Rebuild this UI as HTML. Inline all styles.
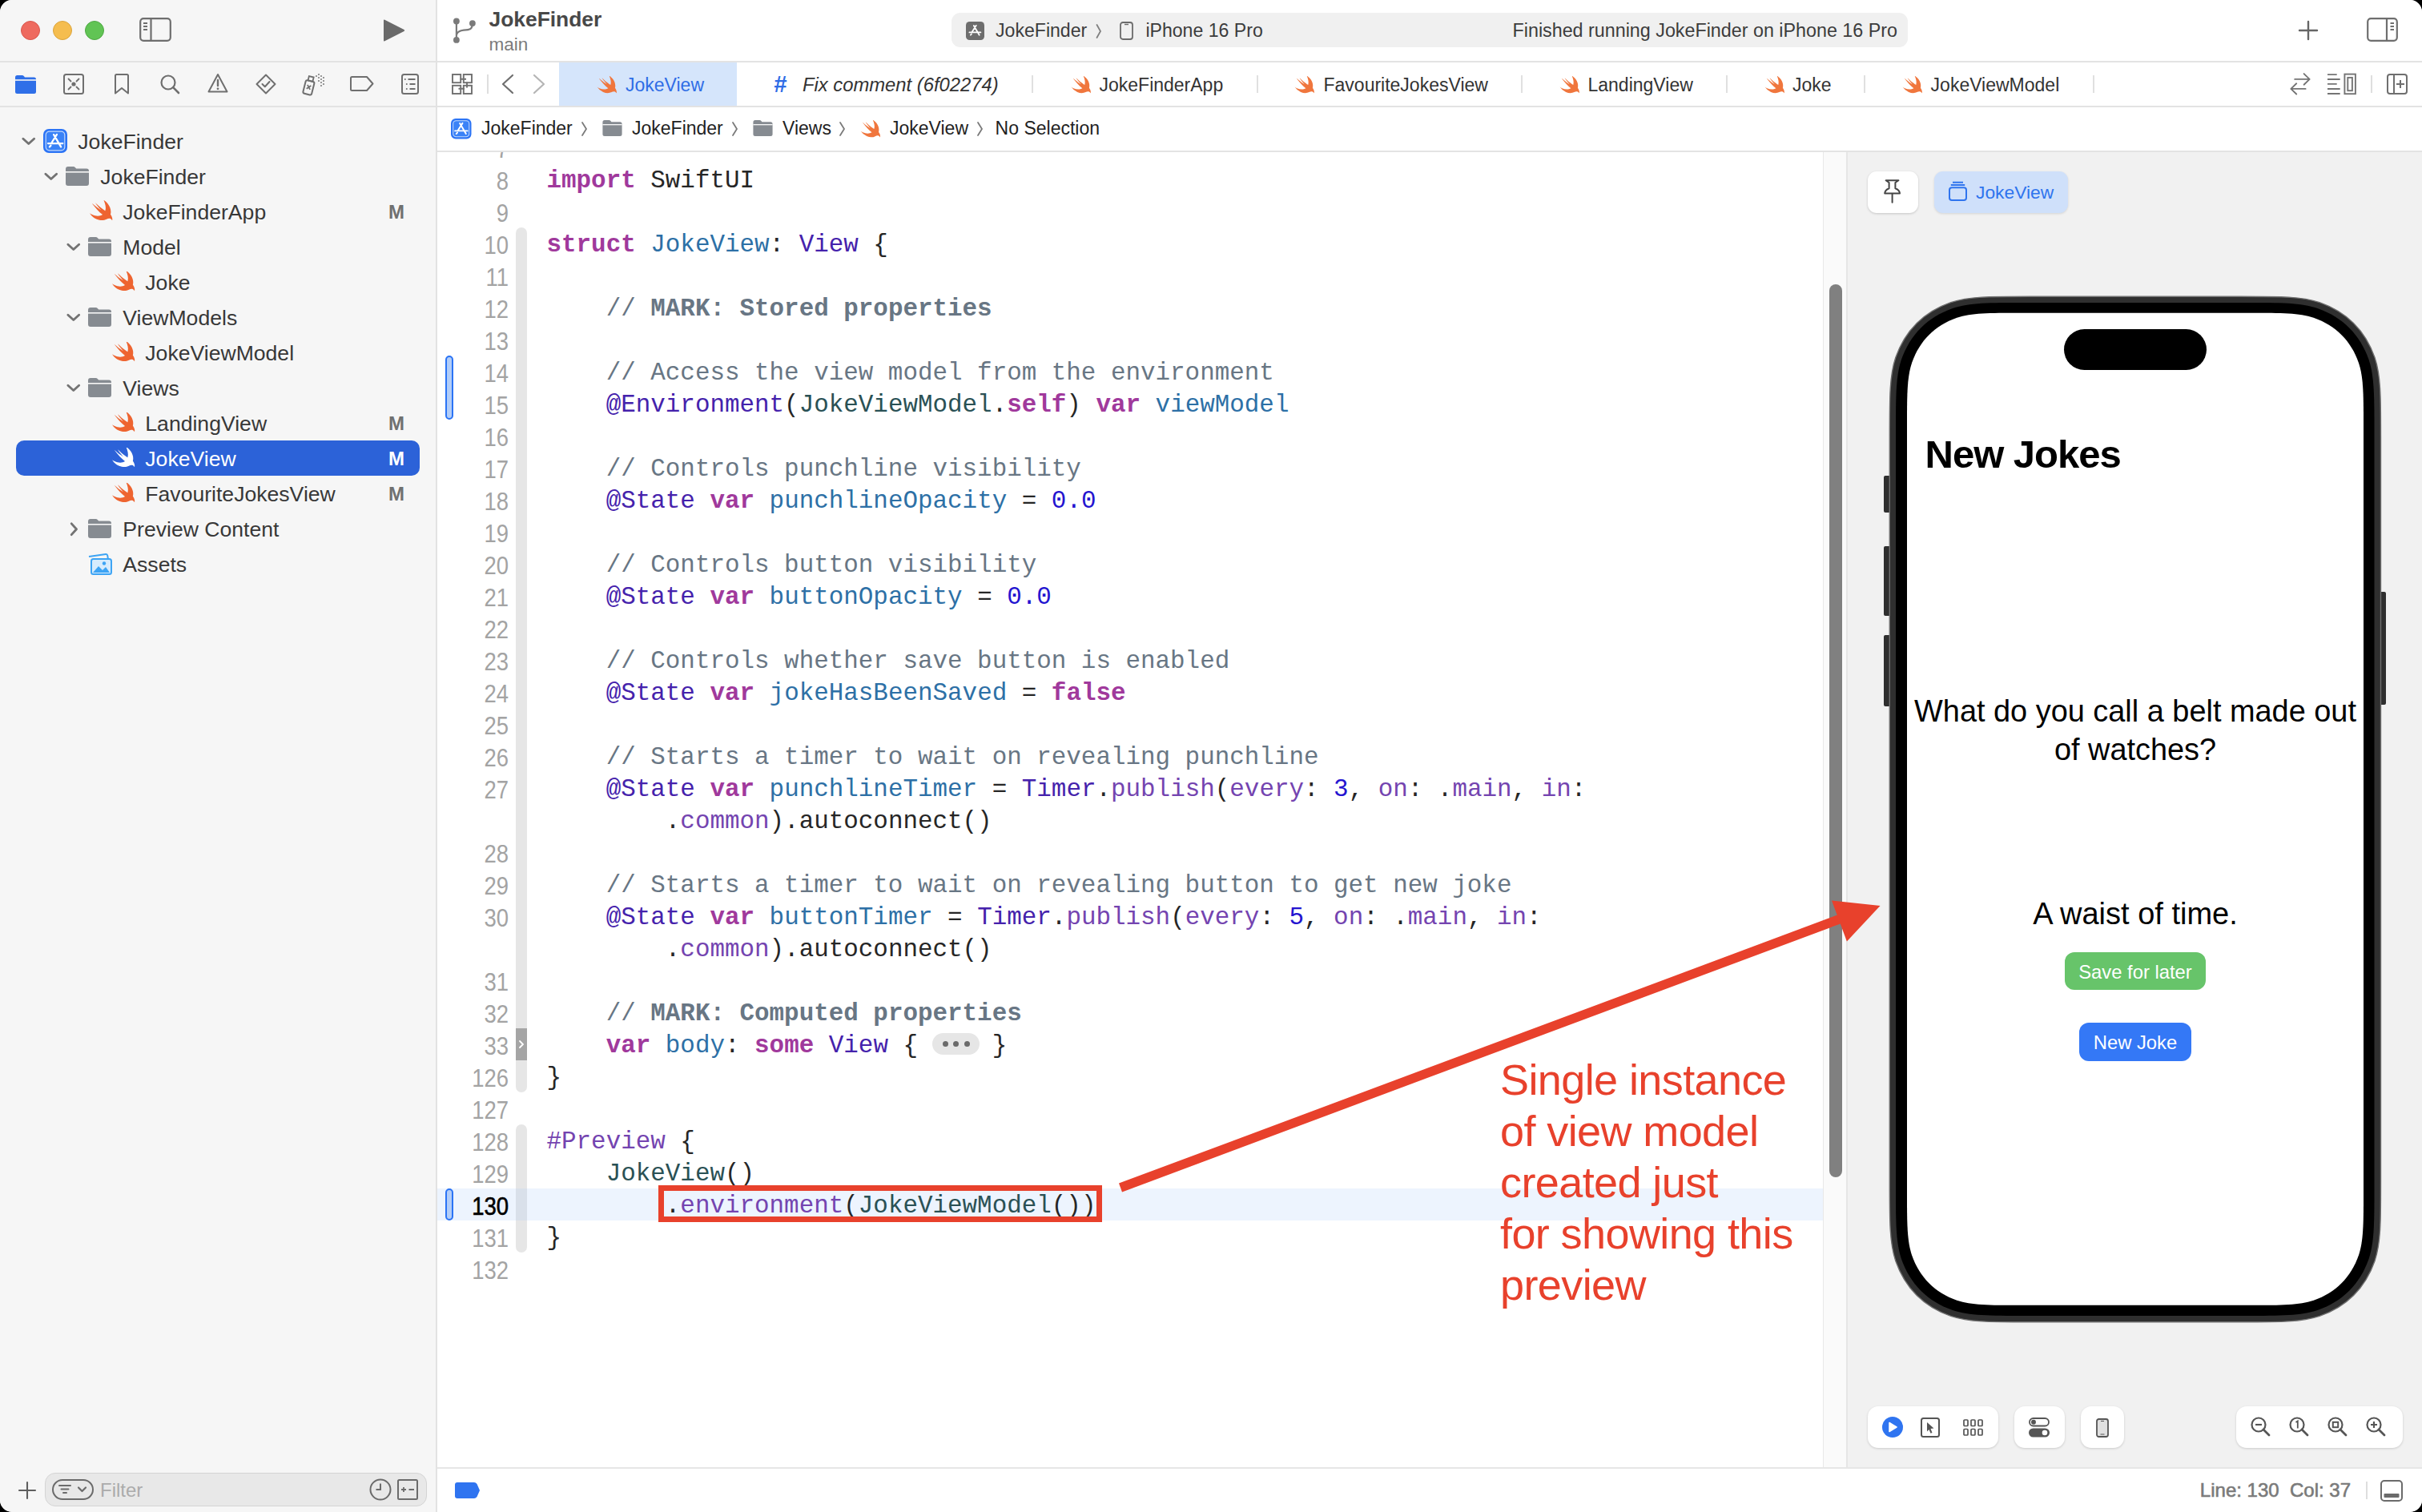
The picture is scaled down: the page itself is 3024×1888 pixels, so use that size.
<!DOCTYPE html><html><head><meta charset="utf-8"><style>
html,body{margin:0;padding:0;background:#000;width:3024px;height:1888px;overflow:hidden}
#win{position:absolute;left:0;top:0;width:3024px;height:1888px;background:#fff;border-radius:15px;overflow:hidden;font-family:"Liberation Sans",sans-serif}
.a{position:absolute;white-space:pre;margin:0}
svg.a{overflow:visible}
</style></head><body><div id="win">
<div class="a" style="left:0px;top:0px;width:544px;height:1888px;background:#f6f6f6;"></div>
<div class="a" style="left:544px;top:0px;width:2px;height:1888px;background:#e2e2e2;"></div>
<div class="a" style="left:0px;top:76px;width:544px;height:2px;background:#e3e3e3;"></div>
<div class="a" style="left:0px;top:132px;width:544px;height:2px;background:#e3e3e3;"></div>
<div class="a" style="left:26px;top:26px;width:22px;height:22px;border-radius:50%;background:#ee6a5f;border:1px solid #d9574d"></div>
<div class="a" style="left:66px;top:26px;width:22px;height:22px;border-radius:50%;background:#f5bd4f;border:1px solid #dba43c"></div>
<div class="a" style="left:106px;top:26px;width:22px;height:22px;border-radius:50%;background:#61c454;border:1px solid #4ea843"></div>
<svg class="a" style="left:174px;top:22px;" width="40" height="30" viewBox="0 0 40 30"><rect x="1.2" y="1.2" width="37.6" height="27.6" rx="4" fill="none" stroke="#6e6e6e" stroke-width="2.2"/><path d="M14.5 1.5 V28.5" stroke="#6e6e6e" stroke-width="2.2"/><path d="M5 7 H10 M5 11 H10 M5 15 H10" stroke="#6e6e6e" stroke-width="1.8"/></svg>
<svg class="a" style="left:477px;top:24px;" width="29" height="28" viewBox="0 0 29 28"><path d="M2 1.5 Q2 0 3.4 0.8 L27.5 13 Q29 14 27.5 15 L3.4 27.2 Q2 28 2 26.5 Z" fill="#6a6a6a"/></svg>
<svg class="a" style="left:19px;top:94px;" width="26" height="23" viewBox="0 0 26 23"><path fill="#2f6fe8" d="M0 2.5 Q0 0 2.5 0 H8.5 Q10 0 11 1.2 L12 2.4 H23.5 Q26 2.4 26 4.9 V20.5 Q26 23 23.5 23 H2.5 Q0 23 0 20.5 Z"/><rect x="0" y="5.2" width="26" height="1.6" fill="#f6f6f6"/></svg>
<svg class="a" style="left:79px;top:92px;" width="26" height="26" viewBox="0 0 26 26"><rect x="1" y="1" width="24" height="24" rx="2.5" fill="none" stroke="#6f6f6f" stroke-width="2"/><circle cx="13" cy="13" r="2.6" fill="#6f6f6f"/><path d="M6.5 6.5 L9.5 9.5 M19.5 6.5 L16.5 9.5 M6.5 19.5 L9.5 16.5 M19.5 19.5 L16.5 16.5" stroke="#6f6f6f" stroke-width="1.8" stroke-linecap="round"/></svg>
<svg class="a" style="left:142px;top:92px;" width="20" height="26" viewBox="0 0 20 26"><path d="M2 2.5 Q2 1 3.5 1 H16.5 Q18 1 18 2.5 V24.5 L10 18 L2 24.5 Z" fill="none" stroke="#6f6f6f" stroke-width="2" stroke-linejoin="round"/></svg>
<svg class="a" style="left:199px;top:92px;" width="26" height="26" viewBox="0 0 26 26"><circle cx="11" cy="11" r="8.5" fill="none" stroke="#6f6f6f" stroke-width="2.2"/><path d="M17.2 17.2 L24 24" stroke="#6f6f6f" stroke-width="2.6" stroke-linecap="round"/></svg>
<svg class="a" style="left:259px;top:91px;" width="26" height="26" viewBox="0 0 26 26"><path d="M13 2 L24.5 23.5 H1.5 Z" fill="none" stroke="#6f6f6f" stroke-width="2" stroke-linejoin="round"/><path d="M13 9 V16" stroke="#6f6f6f" stroke-width="2.4" stroke-linecap="round"/><circle cx="13" cy="19.8" r="1.4" fill="#6f6f6f"/></svg>
<svg class="a" style="left:319px;top:92px;" width="26" height="26" viewBox="0 0 26 26"><path d="M13 1.5 L24.5 13 L13 24.5 L1.5 13 Z" fill="none" stroke="#6f6f6f" stroke-width="2" stroke-linejoin="round"/><path d="M8.5 13 L11.8 16.2 L17.5 10" fill="none" stroke="#6f6f6f" stroke-width="2" stroke-linecap="round" stroke-linejoin="round"/></svg>
<svg class="a" style="left:376px;top:91px;" width="33" height="29" viewBox="0 0 33 29"><g transform="rotate(14 10 18)"><rect x="4" y="10" width="11" height="17" rx="2" fill="none" stroke="#6f6f6f" stroke-width="2"/><rect x="6.5" y="4.5" width="6" height="5.5" fill="none" stroke="#6f6f6f" stroke-width="1.8"/><path d="M7.2 15.5 L11.8 20.5 M11.8 15.5 L7.2 20.5" stroke="#6f6f6f" stroke-width="1.7"/></g><g fill="#6f6f6f"><circle cx="19" cy="4" r=".95"/><circle cx="22" cy="2" r=".95"/><circle cx="22" cy="6" r=".95"/><circle cx="25" cy="4" r=".95"/><circle cx="25" cy="8" r=".95"/><circle cx="28" cy="6" r=".95"/><circle cx="28" cy="10" r=".95"/><circle cx="25" cy="12" r=".95"/><circle cx="28" cy="14" r=".95"/><circle cx="22" cy="10" r=".95"/><circle cx="25" cy="16" r=".95"/></g></svg>
<svg class="a" style="left:437px;top:95px;" width="30" height="19" viewBox="0 0 30 19"><path d="M2.5 1 H21 L28.5 9.5 L21 18 H2.5 Q1 18 1 16.5 V2.5 Q1 1 2.5 1 Z" fill="none" stroke="#6f6f6f" stroke-width="2" stroke-linejoin="round"/></svg>
<svg class="a" style="left:501px;top:92px;" width="22" height="26" viewBox="0 0 22 26"><rect x="1" y="1" width="20" height="24" rx="2.5" fill="none" stroke="#6f6f6f" stroke-width="2"/><path d="M8.5 7 H17.5 M10.5 13 H17.5 M10.5 19 H17.5" stroke="#6f6f6f" stroke-width="1.9"/><circle cx="4.8" cy="7" r="1" fill="#6f6f6f"/><circle cx="6.8" cy="13" r="1" fill="#6f6f6f"/><circle cx="6.8" cy="19" r="1" fill="#6f6f6f"/></svg>
<svg class="a" style="left:27.25px;top:168.45000000000002px;" width="17.5" height="17.5" viewBox="0 0 14 14"><path d="M1.5 4.2 L7 9.2 L12.5 4.2" fill="none" stroke="#737373" stroke-width="2.3" stroke-linecap="round" stroke-linejoin="round"/></svg>
<svg class="a" style="left:54px;top:161.4px;" width="30" height="30.0" viewBox="0 0 30 30"><rect x="0" y="0" width="30" height="30" rx="7" fill="#2c74f5"/><rect x="2.6" y="2.6" width="24.8" height="24.8" rx="5" fill="#c3dafc"/><rect x="3.8" y="3.8" width="22.4" height="22.4" rx="4" fill="#3a82f7"/><g stroke="#fff" stroke-width="2.3" stroke-linecap="round" fill="none"><path d="M13.1 7.1 L22.1 22.4 M17 6.9 L10.6 17 M9.4 20.7 L7.9 22.4 M6 18.1 H24.3"/></g></svg>
<div class="a" style="left:97.3px;top:164.1px;font-size:26.6px;line-height:26.6px;color:#383838;font-family:'Liberation Sans',sans-serif;">JokeFinder</div>
<svg class="a" style="left:55.25px;top:212.45000000000002px;" width="17.5" height="17.5" viewBox="0 0 14 14"><path d="M1.5 4.2 L7 9.2 L12.5 4.2" fill="none" stroke="#737373" stroke-width="2.3" stroke-linecap="round" stroke-linejoin="round"/></svg>
<svg class="a" style="left:82px;top:208.4px;" width="29" height="24.0" viewBox="0 0 29 24"><path fill="#868b91" d="M0 3 Q0 0 3 0 H9.5 Q11 0 12 1.2 L13.2 2.6 H26 Q29 2.6 29 5.6 V21 Q29 24 26 24 H3 Q0 24 0 21 Z"/><rect x="0" y="6" width="29" height="1.6" fill="#f6f6f6"/></svg>
<div class="a" style="left:125.3px;top:208.1px;font-size:26.6px;line-height:26.6px;color:#383838;font-family:'Liberation Sans',sans-serif;">JokeFinder</div>
<svg class="a" style="left:108.5px;top:249.4px;" width="31.900000000000006" height="28.599999999999994" viewBox="0.5 3.4 20.4 17.2"><path fill="#ee6430" d="M13.543 3.41c4.114 2.47 6.545 7.162 5.549 11.131-.024.093-.05.181-.076.272l.002.001c2.062 2.538 1.5 5.258 1.236 4.745-1.072-2.086-3.066-1.568-4.088-1.043a6.803 6.803 0 0 1-.281.158l-.02.012-.002.002c-2.115 1.123-4.957 1.205-7.812-.022a12.568 12.568 0 0 1-5.64-4.838c.649.48 1.35.902 2.097 1.252 3.019 1.414 6.051 1.311 8.197-.002C9.651 12.73 7.101 9.670 5.146 7.191a10.628 10.628 0 0 1-1.005-1.384c2.34 2.142 6.038 4.83 7.365 5.576C8.69 8.408 6.208 4.743 7.324 5.86c3.724 3.769 7.181 5.912 7.181 5.912.115.065.203.117.272.164.074-.19.14-.39.193-.596.574-2.1-.088-4.92-1.37-7.93z"/></svg>
<div class="a" style="left:153.3px;top:252.1px;font-size:26.6px;line-height:26.6px;color:#383838;font-family:'Liberation Sans',sans-serif;">JokeFinderApp</div>
<div class="a" style="left:-505.0px;width:2000px;text-align:center;top:253.3px;font-size:24px;line-height:24px;color:#707070;font-family:'Liberation Sans',sans-serif;font-weight:bold;">M</div>
<svg class="a" style="left:83.25px;top:300.45px;" width="17.5" height="17.5" viewBox="0 0 14 14"><path d="M1.5 4.2 L7 9.2 L12.5 4.2" fill="none" stroke="#737373" stroke-width="2.3" stroke-linecap="round" stroke-linejoin="round"/></svg>
<svg class="a" style="left:110px;top:296.4px;" width="29" height="24.0" viewBox="0 0 29 24"><path fill="#868b91" d="M0 3 Q0 0 3 0 H9.5 Q11 0 12 1.2 L13.2 2.6 H26 Q29 2.6 29 5.6 V21 Q29 24 26 24 H3 Q0 24 0 21 Z"/><rect x="0" y="6" width="29" height="1.6" fill="#f6f6f6"/></svg>
<div class="a" style="left:153.3px;top:296.1px;font-size:26.6px;line-height:26.6px;color:#383838;font-family:'Liberation Sans',sans-serif;">Model</div>
<svg class="a" style="left:136.6px;top:337.4px;" width="31.80000000000001" height="28.600000000000023" viewBox="0.5 3.4 20.4 17.2"><path fill="#ee6430" d="M13.543 3.41c4.114 2.47 6.545 7.162 5.549 11.131-.024.093-.05.181-.076.272l.002.001c2.062 2.538 1.5 5.258 1.236 4.745-1.072-2.086-3.066-1.568-4.088-1.043a6.803 6.803 0 0 1-.281.158l-.02.012-.002.002c-2.115 1.123-4.957 1.205-7.812-.022a12.568 12.568 0 0 1-5.64-4.838c.649.48 1.35.902 2.097 1.252 3.019 1.414 6.051 1.311 8.197-.002C9.651 12.73 7.101 9.670 5.146 7.191a10.628 10.628 0 0 1-1.005-1.384c2.34 2.142 6.038 4.83 7.365 5.576C8.69 8.408 6.208 4.743 7.324 5.86c3.724 3.769 7.181 5.912 7.181 5.912.115.065.203.117.272.164.074-.19.14-.39.193-.596.574-2.1-.088-4.92-1.37-7.93z"/></svg>
<div class="a" style="left:181.3px;top:340.1px;font-size:26.6px;line-height:26.6px;color:#383838;font-family:'Liberation Sans',sans-serif;">Joke</div>
<svg class="a" style="left:83.25px;top:388.45px;" width="17.5" height="17.5" viewBox="0 0 14 14"><path d="M1.5 4.2 L7 9.2 L12.5 4.2" fill="none" stroke="#737373" stroke-width="2.3" stroke-linecap="round" stroke-linejoin="round"/></svg>
<svg class="a" style="left:110px;top:384.4px;" width="29" height="24.0" viewBox="0 0 29 24"><path fill="#868b91" d="M0 3 Q0 0 3 0 H9.5 Q11 0 12 1.2 L13.2 2.6 H26 Q29 2.6 29 5.6 V21 Q29 24 26 24 H3 Q0 24 0 21 Z"/><rect x="0" y="6" width="29" height="1.6" fill="#f6f6f6"/></svg>
<div class="a" style="left:153.3px;top:384.1px;font-size:26.6px;line-height:26.6px;color:#383838;font-family:'Liberation Sans',sans-serif;">ViewModels</div>
<svg class="a" style="left:136.6px;top:425.4px;" width="31.80000000000001" height="28.600000000000023" viewBox="0.5 3.4 20.4 17.2"><path fill="#ee6430" d="M13.543 3.41c4.114 2.47 6.545 7.162 5.549 11.131-.024.093-.05.181-.076.272l.002.001c2.062 2.538 1.5 5.258 1.236 4.745-1.072-2.086-3.066-1.568-4.088-1.043a6.803 6.803 0 0 1-.281.158l-.02.012-.002.002c-2.115 1.123-4.957 1.205-7.812-.022a12.568 12.568 0 0 1-5.64-4.838c.649.48 1.35.902 2.097 1.252 3.019 1.414 6.051 1.311 8.197-.002C9.651 12.73 7.101 9.670 5.146 7.191a10.628 10.628 0 0 1-1.005-1.384c2.34 2.142 6.038 4.83 7.365 5.576C8.69 8.408 6.208 4.743 7.324 5.86c3.724 3.769 7.181 5.912 7.181 5.912.115.065.203.117.272.164.074-.19.14-.39.193-.596.574-2.1-.088-4.92-1.37-7.93z"/></svg>
<div class="a" style="left:181.3px;top:428.1px;font-size:26.6px;line-height:26.6px;color:#383838;font-family:'Liberation Sans',sans-serif;">JokeViewModel</div>
<svg class="a" style="left:83.25px;top:476.45px;" width="17.5" height="17.5" viewBox="0 0 14 14"><path d="M1.5 4.2 L7 9.2 L12.5 4.2" fill="none" stroke="#737373" stroke-width="2.3" stroke-linecap="round" stroke-linejoin="round"/></svg>
<svg class="a" style="left:110px;top:472.4px;" width="29" height="24.0" viewBox="0 0 29 24"><path fill="#868b91" d="M0 3 Q0 0 3 0 H9.5 Q11 0 12 1.2 L13.2 2.6 H26 Q29 2.6 29 5.6 V21 Q29 24 26 24 H3 Q0 24 0 21 Z"/><rect x="0" y="6" width="29" height="1.6" fill="#f6f6f6"/></svg>
<div class="a" style="left:153.3px;top:472.1px;font-size:26.6px;line-height:26.6px;color:#383838;font-family:'Liberation Sans',sans-serif;">Views</div>
<svg class="a" style="left:136.6px;top:513.4px;" width="31.80000000000001" height="28.600000000000023" viewBox="0.5 3.4 20.4 17.2"><path fill="#ee6430" d="M13.543 3.41c4.114 2.47 6.545 7.162 5.549 11.131-.024.093-.05.181-.076.272l.002.001c2.062 2.538 1.5 5.258 1.236 4.745-1.072-2.086-3.066-1.568-4.088-1.043a6.803 6.803 0 0 1-.281.158l-.02.012-.002.002c-2.115 1.123-4.957 1.205-7.812-.022a12.568 12.568 0 0 1-5.64-4.838c.649.48 1.35.902 2.097 1.252 3.019 1.414 6.051 1.311 8.197-.002C9.651 12.73 7.101 9.670 5.146 7.191a10.628 10.628 0 0 1-1.005-1.384c2.34 2.142 6.038 4.83 7.365 5.576C8.69 8.408 6.208 4.743 7.324 5.86c3.724 3.769 7.181 5.912 7.181 5.912.115.065.203.117.272.164.074-.19.14-.39.193-.596.574-2.1-.088-4.92-1.37-7.93z"/></svg>
<div class="a" style="left:181.3px;top:516.1px;font-size:26.6px;line-height:26.6px;color:#383838;font-family:'Liberation Sans',sans-serif;">LandingView</div>
<div class="a" style="left:-505.0px;width:2000px;text-align:center;top:517.3px;font-size:24px;line-height:24px;color:#707070;font-family:'Liberation Sans',sans-serif;font-weight:bold;">M</div>
<div class="a" style="left:20px;top:550px;width:504px;height:44px;background:#2c62d8;border-radius:10px;"></div>
<svg class="a" style="left:136.6px;top:557.4px;" width="31.80000000000001" height="28.600000000000023" viewBox="0.5 3.4 20.4 17.2"><path fill="#fff" d="M13.543 3.41c4.114 2.47 6.545 7.162 5.549 11.131-.024.093-.05.181-.076.272l.002.001c2.062 2.538 1.5 5.258 1.236 4.745-1.072-2.086-3.066-1.568-4.088-1.043a6.803 6.803 0 0 1-.281.158l-.02.012-.002.002c-2.115 1.123-4.957 1.205-7.812-.022a12.568 12.568 0 0 1-5.64-4.838c.649.48 1.35.902 2.097 1.252 3.019 1.414 6.051 1.311 8.197-.002C9.651 12.73 7.101 9.670 5.146 7.191a10.628 10.628 0 0 1-1.005-1.384c2.34 2.142 6.038 4.83 7.365 5.576C8.69 8.408 6.208 4.743 7.324 5.86c3.724 3.769 7.181 5.912 7.181 5.912.115.065.203.117.272.164.074-.19.14-.39.193-.596.574-2.1-.088-4.92-1.37-7.93z"/></svg>
<div class="a" style="left:181.3px;top:560.1px;font-size:26.6px;line-height:26.6px;color:#fff;font-family:'Liberation Sans',sans-serif;">JokeView</div>
<div class="a" style="left:-505.0px;width:2000px;text-align:center;top:561.3px;font-size:24px;line-height:24px;color:#fff;font-family:'Liberation Sans',sans-serif;font-weight:bold;">M</div>
<svg class="a" style="left:136.6px;top:601.4px;" width="31.80000000000001" height="28.600000000000023" viewBox="0.5 3.4 20.4 17.2"><path fill="#ee6430" d="M13.543 3.41c4.114 2.47 6.545 7.162 5.549 11.131-.024.093-.05.181-.076.272l.002.001c2.062 2.538 1.5 5.258 1.236 4.745-1.072-2.086-3.066-1.568-4.088-1.043a6.803 6.803 0 0 1-.281.158l-.02.012-.002.002c-2.115 1.123-4.957 1.205-7.812-.022a12.568 12.568 0 0 1-5.64-4.838c.649.48 1.35.902 2.097 1.252 3.019 1.414 6.051 1.311 8.197-.002C9.651 12.73 7.101 9.670 5.146 7.191a10.628 10.628 0 0 1-1.005-1.384c2.34 2.142 6.038 4.83 7.365 5.576C8.69 8.408 6.208 4.743 7.324 5.86c3.724 3.769 7.181 5.912 7.181 5.912.115.065.203.117.272.164.074-.19.14-.39.193-.596.574-2.1-.088-4.92-1.37-7.93z"/></svg>
<div class="a" style="left:181.3px;top:604.1px;font-size:26.6px;line-height:26.6px;color:#383838;font-family:'Liberation Sans',sans-serif;">FavouriteJokesView</div>
<div class="a" style="left:-505.0px;width:2000px;text-align:center;top:605.3px;font-size:24px;line-height:24px;color:#707070;font-family:'Liberation Sans',sans-serif;font-weight:bold;">M</div>
<svg class="a" style="left:84.25px;top:652.4499999999999px;" width="17.5" height="17.5" viewBox="0 0 14 14"><path d="M4.2 1.5 L9.2 7 L4.2 12.5" fill="none" stroke="#737373" stroke-width="2.3" stroke-linecap="round" stroke-linejoin="round"/></svg>
<svg class="a" style="left:110px;top:648.4px;" width="29" height="24.0" viewBox="0 0 29 24"><path fill="#868b91" d="M0 3 Q0 0 3 0 H9.5 Q11 0 12 1.2 L13.2 2.6 H26 Q29 2.6 29 5.6 V21 Q29 24 26 24 H3 Q0 24 0 21 Z"/><rect x="0" y="6" width="29" height="1.6" fill="#f6f6f6"/></svg>
<div class="a" style="left:153.3px;top:648.1px;font-size:26.6px;line-height:26.6px;color:#383838;font-family:'Liberation Sans',sans-serif;">Preview Content</div>
<svg class="a" style="left:108px;top:689.4px;" width="34" height="30.0" viewBox="0 0 34 30"><path d="M3 6 L24 3 Q26 2.8 26.3 4.8 L27 10" fill="none" stroke="#3da4f4" stroke-width="2"/><rect x="6" y="9" width="25" height="19" rx="2.5" fill="#d7ecfd" stroke="#3da4f4" stroke-width="2"/><path d="M8 26 L15 18 L20 23 L24 19 L29 26 Z" fill="#3da4f4"/><circle cx="22" cy="14.5" r="2.2" fill="#3da4f4"/></svg>
<div class="a" style="left:153.3px;top:692.1px;font-size:26.6px;line-height:26.6px;color:#383838;font-family:'Liberation Sans',sans-serif;">Assets</div>
<svg class="a" style="left:23px;top:1849.5px;" width="22" height="22.0" viewBox="0 0 22 22"><path d="M11 1 V21 M1 11 H21" stroke="#5f5f5f" stroke-width="2.1" stroke-linecap="round"/></svg>
<div class="a" style="left:56px;top:1838.5px;width:477px;height:42.5px;border-radius:13px;background:#e8e8e8;border:1px solid #d4d4d4;box-sizing:border-box"></div>
<svg class="a" style="left:65px;top:1847px;" width="52" height="26" viewBox="0 0 52 26"><rect x="1" y="1" width="50" height="24" rx="12" fill="none" stroke="#6b6b6b" stroke-width="2"/><path d="M9 8 H23 M11.5 12.5 H20.5 M14 17 H18" stroke="#6b6b6b" stroke-width="2" stroke-linecap="round"/><path d="M33 10.5 L37.5 15 L42 10.5" fill="none" stroke="#6b6b6b" stroke-width="2.2" stroke-linecap="round" stroke-linejoin="round"/></svg>
<div class="a" style="left:125.0px;top:1848.6px;font-size:24px;line-height:24px;color:#ababab;font-family:'Liberation Sans',sans-serif;">Filter</div>
<svg class="a" style="left:461px;top:1846px;" width="28" height="28" viewBox="0 0 28 28"><circle cx="14" cy="14" r="12.5" fill="none" stroke="#6b6b6b" stroke-width="2"/><path d="M14 6.5 V14 H8.5" fill="none" stroke="#6b6b6b" stroke-width="2"/></svg>
<svg class="a" style="left:496px;top:1847px;" width="26" height="26" viewBox="0 0 26 26"><rect x="1" y="1" width="24" height="24" rx="1.5" fill="none" stroke="#6b6b6b" stroke-width="2"/><path d="M5 13 H11 M8 10 V16 M14.5 13 H21" stroke="#6b6b6b" stroke-width="1.8"/></svg>
<div class="a" style="left:546px;top:0px;width:2478px;height:76px;background:#ffffff;"></div>
<div class="a" style="left:546px;top:76px;width:2478px;height:2px;background:#e3e3e3;"></div>
<svg class="a" style="left:560px;top:18px;" width="40" height="40" viewBox="0 0 40 40"><g fill="#7a7a7a"><circle cx="9.9" cy="8.5" r="3.9"/><circle cx="29.9" cy="11.1" r="3.9"/><circle cx="9.9" cy="31.9" r="3.9"/></g><g fill="none" stroke="#7a7a7a" stroke-width="2.2" stroke-linecap="round"><path d="M9.9 9 V31"/><path d="M10.2 25 Q11.5 20.5 19 19.7 Q25.5 19.2 27.5 18 Q29.6 16.4 29.9 12"/></g></svg>
<div class="a" style="left:610.5px;top:11.4px;font-size:26.4px;line-height:26.4px;color:#484848;font-family:'Liberation Sans',sans-serif;font-weight:bold;">JokeFinder</div>
<div class="a" style="left:610.5px;top:44.7px;font-size:22.5px;line-height:22.5px;color:#7b7b7b;font-family:'Liberation Sans',sans-serif;">main</div>
<div class="a" style="left:1188px;top:16px;width:1194px;height:43px;border-radius:11px;background:#f0f0f0"></div>
<svg class="a" style="left:1206px;top:27px;" width="23" height="23" viewBox="0 0 30 30"><rect x="0" y="0" width="30" height="30" rx="6" fill="#6d6d6d"/><g stroke="#fff" stroke-width="2.3" stroke-linecap="round" fill="none" transform="translate(-0.3 -0.6)"><path d="M13.1 7.1 L22.1 22.4 M17 6.9 L10.6 17 M9.4 20.7 L7.9 22.4 M6 18.1 H24.3"/></g></svg>
<div class="a" style="left:1243.0px;top:26.9px;font-size:23.1px;line-height:23.1px;color:#3c3c3c;font-family:'Liberation Sans',sans-serif;">JokeFinder</div>
<svg class="a" style="left:1367px;top:28px;" width="10" height="22" viewBox="0 0 10 22"><path d="M2.5 3 L7 11 L2.5 19" fill="none" stroke="#808080" stroke-width="1.8" stroke-linecap="round"/></svg>
<svg class="a" style="left:1398px;top:27px;" width="17" height="23" viewBox="0 0 17 23"><rect x="1" y="1" width="15" height="21" rx="3" fill="none" stroke="#6b6b6b" stroke-width="1.8"/><path d="M6 3.5 H11" stroke="#6b6b6b" stroke-width="1.4"/></svg>
<div class="a" style="left:1430.4px;top:26.9px;font-size:23.1px;line-height:23.1px;color:#3c3c3c;font-family:'Liberation Sans',sans-serif;">iPhone 16 Pro</div>
<div class="a" style="left:1369.0px;width:1000px;text-align:right;top:26.7px;font-size:23.3px;line-height:23.3px;color:#3c3c3c;font-family:'Liberation Sans',sans-serif;">Finished running JokeFinder on iPhone 16 Pro</div>
<svg class="a" style="left:2870px;top:26px;" width="24" height="24" viewBox="0 0 24 24"><path d="M12 1 V23 M1 12 H23" stroke="#666" stroke-width="2.4" stroke-linecap="round"/></svg>
<svg class="a" style="left:2955px;top:22px;" width="39" height="30" viewBox="0 0 39 30"><rect x="1.2" y="1.2" width="36.6" height="27.6" rx="4" fill="none" stroke="#6e6e6e" stroke-width="2.2"/><path d="M25 1.5 V28.5" stroke="#6e6e6e" stroke-width="2.2"/><path d="M29.5 7 H34 M29.5 11 H34 M29.5 15 H34" stroke="#6e6e6e" stroke-width="1.8"/></svg>
<div class="a" style="left:546px;top:132px;width:2478px;height:2px;background:#e3e3e3;"></div>
<div class="a" style="left:698px;top:78px;width:222px;height:54px;background:#d5e5fb;"></div>
<svg class="a" style="left:564px;top:92px;" width="26" height="26" viewBox="0 0 26 26"><g fill="none" stroke="#707070" stroke-width="1.9"><rect x="1" y="1" width="10.2" height="10.2"/><rect x="14.8" y="1" width="10.2" height="10.2"/><rect x="1" y="14.8" width="10.2" height="10.2"/><rect x="14.8" y="14.8" width="10.2" height="10.2"/><path d="M10.5 6.7 H18 M19 10.5 V17.5 M8.5 18.8 H16"/></g></svg>
<div class="a" style="left:608px;top:93px;width:2px;height:24px;background:#dedede;"></div>
<svg class="a" style="left:625px;top:92px;" width="18" height="26" viewBox="0 0 18 26"><path d="M15 2 L3 13 L15 24" fill="none" stroke="#6f6f6f" stroke-width="2.2" stroke-linecap="round" stroke-linejoin="round"/></svg>
<svg class="a" style="left:664px;top:92px;" width="18" height="26" viewBox="0 0 18 26"><path d="M3 2 L15 13 L3 24" fill="none" stroke="#b5b5b5" stroke-width="2.2" stroke-linecap="round" stroke-linejoin="round"/></svg>
<svg class="a" style="left:742.8px;top:94.2px;" width="27.40000000000009" height="24.200000000000003" viewBox="0.5 3.4 20.4 17.2"><path fill="#f0763d" d="M13.543 3.41c4.114 2.47 6.545 7.162 5.549 11.131-.024.093-.05.181-.076.272l.002.001c2.062 2.538 1.5 5.258 1.236 4.745-1.072-2.086-3.066-1.568-4.088-1.043a6.803 6.803 0 0 1-.281.158l-.02.012-.002.002c-2.115 1.123-4.957 1.205-7.812-.022a12.568 12.568 0 0 1-5.64-4.838c.649.48 1.35.902 2.097 1.252 3.019 1.414 6.051 1.311 8.197-.002C9.651 12.73 7.101 9.670 5.146 7.191a10.628 10.628 0 0 1-1.005-1.384c2.34 2.142 6.038 4.83 7.365 5.576C8.69 8.408 6.208 4.743 7.324 5.86c3.724 3.769 7.181 5.912 7.181 5.912.115.065.203.117.272.164.074-.19.14-.39.193-.596.574-2.1-.088-4.92-1.37-7.93z"/></svg>
<div class="a" style="left:781.0px;top:94.7px;font-size:23px;line-height:23px;color:#2f6de6;font-family:'Liberation Sans',sans-serif;">JokeView</div>
<div class="a" style="left:966.0px;top:91.1px;font-size:29px;line-height:29px;color:#2f6de6;font-family:'Liberation Sans',sans-serif;font-weight:bold;font-style:italic;">#</div>
<div class="a" style="left:1002.0px;top:94.0px;font-size:23.8px;line-height:23.8px;color:#333;font-family:'Liberation Sans',sans-serif;font-style:italic;">Fix comment (6f02274)</div>
<div class="a" style="left:1288px;top:94px;width:2px;height:22px;background:#e0e0e0;"></div>
<div class="a" style="left:1569px;top:94px;width:2px;height:22px;background:#e0e0e0;"></div>
<div class="a" style="left:1899px;top:94px;width:2px;height:22px;background:#e0e0e0;"></div>
<div class="a" style="left:2155px;top:94px;width:2px;height:22px;background:#e0e0e0;"></div>
<div class="a" style="left:2327px;top:94px;width:2px;height:22px;background:#e0e0e0;"></div>
<div class="a" style="left:2613px;top:94px;width:2px;height:22px;background:#e0e0e0;"></div>
<svg class="a" style="left:1334.8px;top:94.2px;" width="27.40000000000009" height="24.200000000000003" viewBox="0.5 3.4 20.4 17.2"><path fill="#f0763d" d="M13.543 3.41c4.114 2.47 6.545 7.162 5.549 11.131-.024.093-.05.181-.076.272l.002.001c2.062 2.538 1.5 5.258 1.236 4.745-1.072-2.086-3.066-1.568-4.088-1.043a6.803 6.803 0 0 1-.281.158l-.02.012-.002.002c-2.115 1.123-4.957 1.205-7.812-.022a12.568 12.568 0 0 1-5.64-4.838c.649.48 1.35.902 2.097 1.252 3.019 1.414 6.051 1.311 8.197-.002C9.651 12.73 7.101 9.670 5.146 7.191a10.628 10.628 0 0 1-1.005-1.384c2.34 2.142 6.038 4.83 7.365 5.576C8.69 8.408 6.208 4.743 7.324 5.86c3.724 3.769 7.181 5.912 7.181 5.912.115.065.203.117.272.164.074-.19.14-.39.193-.596.574-2.1-.088-4.92-1.37-7.93z"/></svg>
<div class="a" style="left:1372.5px;top:94.7px;font-size:23px;line-height:23px;color:#333;font-family:'Liberation Sans',sans-serif;">JokeFinderApp</div>
<svg class="a" style="left:1613.8px;top:94.2px;" width="27.40000000000009" height="24.200000000000003" viewBox="0.5 3.4 20.4 17.2"><path fill="#f0763d" d="M13.543 3.41c4.114 2.47 6.545 7.162 5.549 11.131-.024.093-.05.181-.076.272l.002.001c2.062 2.538 1.5 5.258 1.236 4.745-1.072-2.086-3.066-1.568-4.088-1.043a6.803 6.803 0 0 1-.281.158l-.02.012-.002.002c-2.115 1.123-4.957 1.205-7.812-.022a12.568 12.568 0 0 1-5.64-4.838c.649.48 1.35.902 2.097 1.252 3.019 1.414 6.051 1.311 8.197-.002C9.651 12.73 7.101 9.670 5.146 7.191a10.628 10.628 0 0 1-1.005-1.384c2.34 2.142 6.038 4.83 7.365 5.576C8.69 8.408 6.208 4.743 7.324 5.86c3.724 3.769 7.181 5.912 7.181 5.912.115.065.203.117.272.164.074-.19.14-.39.193-.596.574-2.1-.088-4.92-1.37-7.93z"/></svg>
<div class="a" style="left:1652.5px;top:94.7px;font-size:23px;line-height:23px;color:#333;font-family:'Liberation Sans',sans-serif;">FavouriteJokesView</div>
<svg class="a" style="left:1944.8px;top:94.2px;" width="27.40000000000009" height="24.200000000000003" viewBox="0.5 3.4 20.4 17.2"><path fill="#f0763d" d="M13.543 3.41c4.114 2.47 6.545 7.162 5.549 11.131-.024.093-.05.181-.076.272l.002.001c2.062 2.538 1.5 5.258 1.236 4.745-1.072-2.086-3.066-1.568-4.088-1.043a6.803 6.803 0 0 1-.281.158l-.02.012-.002.002c-2.115 1.123-4.957 1.205-7.812-.022a12.568 12.568 0 0 1-5.64-4.838c.649.48 1.35.902 2.097 1.252 3.019 1.414 6.051 1.311 8.197-.002C9.651 12.73 7.101 9.670 5.146 7.191a10.628 10.628 0 0 1-1.005-1.384c2.34 2.142 6.038 4.83 7.365 5.576C8.69 8.408 6.208 4.743 7.324 5.86c3.724 3.769 7.181 5.912 7.181 5.912.115.065.203.117.272.164.074-.19.14-.39.193-.596.574-2.1-.088-4.92-1.37-7.93z"/></svg>
<div class="a" style="left:1982.5px;top:94.7px;font-size:23px;line-height:23px;color:#333;font-family:'Liberation Sans',sans-serif;">LandingView</div>
<svg class="a" style="left:2200.8px;top:94.2px;" width="27.399999999999636" height="24.200000000000003" viewBox="0.5 3.4 20.4 17.2"><path fill="#f0763d" d="M13.543 3.41c4.114 2.47 6.545 7.162 5.549 11.131-.024.093-.05.181-.076.272l.002.001c2.062 2.538 1.5 5.258 1.236 4.745-1.072-2.086-3.066-1.568-4.088-1.043a6.803 6.803 0 0 1-.281.158l-.02.012-.002.002c-2.115 1.123-4.957 1.205-7.812-.022a12.568 12.568 0 0 1-5.64-4.838c.649.48 1.35.902 2.097 1.252 3.019 1.414 6.051 1.311 8.197-.002C9.651 12.73 7.101 9.670 5.146 7.191a10.628 10.628 0 0 1-1.005-1.384c2.34 2.142 6.038 4.83 7.365 5.576C8.69 8.408 6.208 4.743 7.324 5.86c3.724 3.769 7.181 5.912 7.181 5.912.115.065.203.117.272.164.074-.19.14-.39.193-.596.574-2.1-.088-4.92-1.37-7.93z"/></svg>
<div class="a" style="left:2238.0px;top:94.7px;font-size:23px;line-height:23px;color:#333;font-family:'Liberation Sans',sans-serif;">Joke</div>
<svg class="a" style="left:2372.8px;top:94.2px;" width="27.399999999999636" height="24.200000000000003" viewBox="0.5 3.4 20.4 17.2"><path fill="#f0763d" d="M13.543 3.41c4.114 2.47 6.545 7.162 5.549 11.131-.024.093-.05.181-.076.272l.002.001c2.062 2.538 1.5 5.258 1.236 4.745-1.072-2.086-3.066-1.568-4.088-1.043a6.803 6.803 0 0 1-.281.158l-.02.012-.002.002c-2.115 1.123-4.957 1.205-7.812-.022a12.568 12.568 0 0 1-5.64-4.838c.649.48 1.35.902 2.097 1.252 3.019 1.414 6.051 1.311 8.197-.002C9.651 12.73 7.101 9.670 5.146 7.191a10.628 10.628 0 0 1-1.005-1.384c2.34 2.142 6.038 4.83 7.365 5.576C8.69 8.408 6.208 4.743 7.324 5.86c3.724 3.769 7.181 5.912 7.181 5.912.115.065.203.117.272.164.074-.19.14-.39.193-.596.574-2.1-.088-4.92-1.37-7.93z"/></svg>
<div class="a" style="left:2410.6px;top:94.7px;font-size:23px;line-height:23px;color:#333;font-family:'Liberation Sans',sans-serif;">JokeViewModel</div>
<svg class="a" style="left:2850px;top:85px;" width="100" height="40" viewBox="0 0 100 40"><g fill="none" stroke="#747474" stroke-width="1.9" stroke-linecap="round" stroke-linejoin="round"><path d="M15.2 13.9 H33.6 M26.6 7.1 L33.6 13.9 L26.6 20.7"/><path d="M28.6 25.9 H10.4 M17.2 19.3 L10.4 25.9 L17.2 32.5"/></g><g stroke="#747474" stroke-width="1.9" fill="none"><path d="M56 8.1 H67.7 M56 14 H71.7 M56 19.9 H67.7 M56 26 H71.7 M56 32 H71.7"/><rect x="77.4" y="7.6" width="13.5" height="24.6"/><rect x="81.3" y="11.9" width="5.6" height="16.3"/></g></svg>
<div class="a" style="left:2960px;top:94px;width:2px;height:22px;background:#dedede;"></div>
<svg class="a" style="left:2980px;top:92px;" width="26" height="26" viewBox="0 0 26 26"><g stroke="#6f6f6f" stroke-width="2" fill="none"><rect x="1" y="1" width="24" height="24" rx="3"/><path d="M9 1 V25"/><path d="M17 8 V18 M12 13 H22"/></g></svg>
<div class="a" style="left:546px;top:188px;width:1760px;height:2px;background:#e3e3e3;"></div>
<div class="a" style="left:2306px;top:188px;width:718px;height:2px;background:#e3e3e3;"></div>
<svg class="a" style="left:562.5px;top:147.5px;" width="25.5" height="25.5" viewBox="0 0 30 30"><rect x="0" y="0" width="30" height="30" rx="7" fill="#2c74f5"/><rect x="2.6" y="2.6" width="24.8" height="24.8" rx="5" fill="#c3dafc"/><rect x="3.8" y="3.8" width="22.4" height="22.4" rx="4" fill="#3a82f7"/><g stroke="#fff" stroke-width="2.3" stroke-linecap="round" fill="none"><path d="M13.1 7.1 L22.1 22.4 M17 6.9 L10.6 17 M9.4 20.7 L7.9 22.4 M6 18.1 H24.3"/></g></svg>
<div class="a" style="left:601.0px;top:149.0px;font-size:23px;line-height:23px;color:#222;font-family:'Liberation Sans',sans-serif;">JokeFinder</div>
<svg class="a" style="left:725px;top:151px;" width="9" height="20" viewBox="0 0 9 20"><path d="M2 2 L7 10 L2 18" fill="none" stroke="#7a7a7a" stroke-width="1.8" stroke-linecap="round"/></svg>
<svg class="a" style="left:752px;top:150px;" width="25" height="20" viewBox="0 0 29 24"><path fill="#868b91" d="M0 3 Q0 0 3 0 H9.5 Q11 0 12 1.2 L13.2 2.6 H26 Q29 2.6 29 5.6 V21 Q29 24 26 24 H3 Q0 24 0 21 Z"/><rect x="0" y="6" width="29" height="1.6" fill="#f6f6f6"/></svg>
<div class="a" style="left:789.0px;top:149.0px;font-size:23px;line-height:23px;color:#222;font-family:'Liberation Sans',sans-serif;">JokeFinder</div>
<svg class="a" style="left:913px;top:151px;" width="9" height="20" viewBox="0 0 9 20"><path d="M2 2 L7 10 L2 18" fill="none" stroke="#7a7a7a" stroke-width="1.8" stroke-linecap="round"/></svg>
<svg class="a" style="left:940px;top:150px;" width="25" height="20" viewBox="0 0 29 24"><path fill="#868b91" d="M0 3 Q0 0 3 0 H9.5 Q11 0 12 1.2 L13.2 2.6 H26 Q29 2.6 29 5.6 V21 Q29 24 26 24 H3 Q0 24 0 21 Z"/><rect x="0" y="6" width="29" height="1.6" fill="#f6f6f6"/></svg>
<div class="a" style="left:977.0px;top:149.0px;font-size:23px;line-height:23px;color:#222;font-family:'Liberation Sans',sans-serif;">Views</div>
<svg class="a" style="left:1047px;top:151px;" width="9" height="20" viewBox="0 0 9 20"><path d="M2 2 L7 10 L2 18" fill="none" stroke="#7a7a7a" stroke-width="1.8" stroke-linecap="round"/></svg>
<svg class="a" style="left:1072.2px;top:149.2px;" width="27.59999999999991" height="24.200000000000017" viewBox="0.5 3.4 20.4 17.2"><path fill="#f0763d" d="M13.543 3.41c4.114 2.47 6.545 7.162 5.549 11.131-.024.093-.05.181-.076.272l.002.001c2.062 2.538 1.5 5.258 1.236 4.745-1.072-2.086-3.066-1.568-4.088-1.043a6.803 6.803 0 0 1-.281.158l-.02.012-.002.002c-2.115 1.123-4.957 1.205-7.812-.022a12.568 12.568 0 0 1-5.64-4.838c.649.48 1.35.902 2.097 1.252 3.019 1.414 6.051 1.311 8.197-.002C9.651 12.73 7.101 9.670 5.146 7.191a10.628 10.628 0 0 1-1.005-1.384c2.34 2.142 6.038 4.83 7.365 5.576C8.69 8.408 6.208 4.743 7.324 5.86c3.724 3.769 7.181 5.912 7.181 5.912.115.065.203.117.272.164.074-.19.14-.39.193-.596.574-2.1-.088-4.92-1.37-7.93z"/></svg>
<div class="a" style="left:1111.0px;top:149.0px;font-size:23px;line-height:23px;color:#222;font-family:'Liberation Sans',sans-serif;">JokeView</div>
<svg class="a" style="left:1219px;top:151px;" width="9" height="20" viewBox="0 0 9 20"><path d="M2 2 L7 10 L2 18" fill="none" stroke="#7a7a7a" stroke-width="1.8" stroke-linecap="round"/></svg>
<div class="a" style="left:1242.6px;top:149.0px;font-size:23px;line-height:23px;color:#222;font-family:'Liberation Sans',sans-serif;">No Selection</div>
<div class="a" style="left:546px;top:190px;width:1730px;height:1642px;background:#ffffff;"></div>
<div class="a" style="left:546px;top:1484px;width:1730px;height:40px;background:#edf4fe;"></div>
<div class="a" style="left:644px;top:284px;width:14px;height:1080px;background:#e6e6e6;border-radius:7px;"></div>
<div class="a" style="left:644px;top:1404px;width:14px;height:160px;background:#e6e6e6;border-radius:7px;"></div>
<div class="a" style="left:644px;top:1484px;width:14px;height:40px;background:#d9e0ea;"></div>
<div class="a" style="left:644px;top:1284px;width:14px;height:40px;background:#a5a5a5;"></div>
<svg class="a" style="left:646px;top:1294px;" width="10" height="20" viewBox="0 0 10 20"><path d="M3 6 L7 10 L3 14" fill="none" stroke="#fff" stroke-width="1.8" stroke-linecap="round"/></svg>
<div class="a" style="left:556px;top:444px;width:10px;height:80px;box-sizing:border-box;border:2px solid #2a73f5;background:#b2cdf8;border-radius:5px"></div>
<div class="a" style="left:556px;top:1484px;width:10px;height:40px;box-sizing:border-box;border:2px solid #2a73f5;background:#b2cdf8;border-radius:5px"></div>
<div class="a" style="left:546px;top:190px;width:1730px;height:1642px;overflow:hidden">
<div class="a" style="left:-911px;width:1000px;text-align:right;top:-18.7px;font-size:30.5px;line-height:30.5px;color:#a3a3a3;transform:scaleX(0.9);transform-origin:100% 50%;">7</div>
<div class="a" style="left:-911px;width:1000px;text-align:right;top:21.3px;font-size:30.5px;line-height:30.5px;color:#a3a3a3;transform:scaleX(0.9);transform-origin:100% 50%;">8</div>
<div class="a" style="left:-911px;width:1000px;text-align:right;top:61.3px;font-size:30.5px;line-height:30.5px;color:#a3a3a3;transform:scaleX(0.9);transform-origin:100% 50%;">9</div>
<div class="a" style="left:-911px;width:1000px;text-align:right;top:101.3px;font-size:30.5px;line-height:30.5px;color:#a3a3a3;transform:scaleX(0.9);transform-origin:100% 50%;">10</div>
<div class="a" style="left:-911px;width:1000px;text-align:right;top:141.3px;font-size:30.5px;line-height:30.5px;color:#a3a3a3;transform:scaleX(0.9);transform-origin:100% 50%;">11</div>
<div class="a" style="left:-911px;width:1000px;text-align:right;top:181.3px;font-size:30.5px;line-height:30.5px;color:#a3a3a3;transform:scaleX(0.9);transform-origin:100% 50%;">12</div>
<div class="a" style="left:-911px;width:1000px;text-align:right;top:221.3px;font-size:30.5px;line-height:30.5px;color:#a3a3a3;transform:scaleX(0.9);transform-origin:100% 50%;">13</div>
<div class="a" style="left:-911px;width:1000px;text-align:right;top:261.3px;font-size:30.5px;line-height:30.5px;color:#a3a3a3;transform:scaleX(0.9);transform-origin:100% 50%;">14</div>
<div class="a" style="left:-911px;width:1000px;text-align:right;top:301.3px;font-size:30.5px;line-height:30.5px;color:#a3a3a3;transform:scaleX(0.9);transform-origin:100% 50%;">15</div>
<div class="a" style="left:-911px;width:1000px;text-align:right;top:341.3px;font-size:30.5px;line-height:30.5px;color:#a3a3a3;transform:scaleX(0.9);transform-origin:100% 50%;">16</div>
<div class="a" style="left:-911px;width:1000px;text-align:right;top:381.3px;font-size:30.5px;line-height:30.5px;color:#a3a3a3;transform:scaleX(0.9);transform-origin:100% 50%;">17</div>
<div class="a" style="left:-911px;width:1000px;text-align:right;top:421.3px;font-size:30.5px;line-height:30.5px;color:#a3a3a3;transform:scaleX(0.9);transform-origin:100% 50%;">18</div>
<div class="a" style="left:-911px;width:1000px;text-align:right;top:461.3px;font-size:30.5px;line-height:30.5px;color:#a3a3a3;transform:scaleX(0.9);transform-origin:100% 50%;">19</div>
<div class="a" style="left:-911px;width:1000px;text-align:right;top:501.3px;font-size:30.5px;line-height:30.5px;color:#a3a3a3;transform:scaleX(0.9);transform-origin:100% 50%;">20</div>
<div class="a" style="left:-911px;width:1000px;text-align:right;top:541.3px;font-size:30.5px;line-height:30.5px;color:#a3a3a3;transform:scaleX(0.9);transform-origin:100% 50%;">21</div>
<div class="a" style="left:-911px;width:1000px;text-align:right;top:581.3px;font-size:30.5px;line-height:30.5px;color:#a3a3a3;transform:scaleX(0.9);transform-origin:100% 50%;">22</div>
<div class="a" style="left:-911px;width:1000px;text-align:right;top:621.3px;font-size:30.5px;line-height:30.5px;color:#a3a3a3;transform:scaleX(0.9);transform-origin:100% 50%;">23</div>
<div class="a" style="left:-911px;width:1000px;text-align:right;top:661.3px;font-size:30.5px;line-height:30.5px;color:#a3a3a3;transform:scaleX(0.9);transform-origin:100% 50%;">24</div>
<div class="a" style="left:-911px;width:1000px;text-align:right;top:701.3px;font-size:30.5px;line-height:30.5px;color:#a3a3a3;transform:scaleX(0.9);transform-origin:100% 50%;">25</div>
<div class="a" style="left:-911px;width:1000px;text-align:right;top:741.3px;font-size:30.5px;line-height:30.5px;color:#a3a3a3;transform:scaleX(0.9);transform-origin:100% 50%;">26</div>
<div class="a" style="left:-911px;width:1000px;text-align:right;top:781.3px;font-size:30.5px;line-height:30.5px;color:#a3a3a3;transform:scaleX(0.9);transform-origin:100% 50%;">27</div>
<div class="a" style="left:-911px;width:1000px;text-align:right;top:861.3px;font-size:30.5px;line-height:30.5px;color:#a3a3a3;transform:scaleX(0.9);transform-origin:100% 50%;">28</div>
<div class="a" style="left:-911px;width:1000px;text-align:right;top:901.3px;font-size:30.5px;line-height:30.5px;color:#a3a3a3;transform:scaleX(0.9);transform-origin:100% 50%;">29</div>
<div class="a" style="left:-911px;width:1000px;text-align:right;top:941.3px;font-size:30.5px;line-height:30.5px;color:#a3a3a3;transform:scaleX(0.9);transform-origin:100% 50%;">30</div>
<div class="a" style="left:-911px;width:1000px;text-align:right;top:1021.3px;font-size:30.5px;line-height:30.5px;color:#a3a3a3;transform:scaleX(0.9);transform-origin:100% 50%;">31</div>
<div class="a" style="left:-911px;width:1000px;text-align:right;top:1061.3px;font-size:30.5px;line-height:30.5px;color:#a3a3a3;transform:scaleX(0.9);transform-origin:100% 50%;">32</div>
<div class="a" style="left:-911px;width:1000px;text-align:right;top:1101.3px;font-size:30.5px;line-height:30.5px;color:#a3a3a3;transform:scaleX(0.9);transform-origin:100% 50%;">33</div>
<div class="a" style="left:-911px;width:1000px;text-align:right;top:1141.3px;font-size:30.5px;line-height:30.5px;color:#a3a3a3;transform:scaleX(0.9);transform-origin:100% 50%;">126</div>
<div class="a" style="left:-911px;width:1000px;text-align:right;top:1181.3px;font-size:30.5px;line-height:30.5px;color:#a3a3a3;transform:scaleX(0.9);transform-origin:100% 50%;">127</div>
<div class="a" style="left:-911px;width:1000px;text-align:right;top:1221.3px;font-size:30.5px;line-height:30.5px;color:#a3a3a3;transform:scaleX(0.9);transform-origin:100% 50%;">128</div>
<div class="a" style="left:-911px;width:1000px;text-align:right;top:1261.3px;font-size:30.5px;line-height:30.5px;color:#a3a3a3;transform:scaleX(0.9);transform-origin:100% 50%;">129</div>
<div class="a" style="left:-911px;width:1000px;text-align:right;top:1301.3px;font-size:30.5px;line-height:30.5px;color:#000;transform:scaleX(0.9);transform-origin:100% 50%;-webkit-text-stroke:0.6px #000;">130</div>
<div class="a" style="left:-911px;width:1000px;text-align:right;top:1341.3px;font-size:30.5px;line-height:30.5px;color:#a3a3a3;transform:scaleX(0.9);transform-origin:100% 50%;">131</div>
<div class="a" style="left:-911px;width:1000px;text-align:right;top:1381.3px;font-size:30.5px;line-height:30.5px;color:#a3a3a3;transform:scaleX(0.9);transform-origin:100% 50%;">132</div>
<div class="a" style="left:136.5px;top:20.5px;font-family:'Liberation Mono',monospace;font-size:30.9px;line-height:30.9px;color:#262626"><b style="color:#a0399c">import</b> SwiftUI</div>
<div class="a" style="left:136.5px;top:100.5px;font-family:'Liberation Mono',monospace;font-size:30.9px;line-height:30.9px;color:#262626"><b style="color:#a0399c">struct</b> <span style="color:#2d70a6">JokeView</span>: <span style="color:#4522ac">View</span> {</div>
<div class="a" style="left:136.5px;top:180.5px;font-family:'Liberation Mono',monospace;font-size:30.9px;line-height:30.9px;color:#262626">    <span style="color:#687684">// </span><b style="color:#687684">MARK: Stored properties</b></div>
<div class="a" style="left:136.5px;top:260.5px;font-family:'Liberation Mono',monospace;font-size:30.9px;line-height:30.9px;color:#262626">    <span style="color:#687684">// Access the view model from the environment</span></div>
<div class="a" style="left:136.5px;top:300.5px;font-family:'Liberation Mono',monospace;font-size:30.9px;line-height:30.9px;color:#262626">    <span style="color:#4522ac">@Environment</span>(<span style="color:#2a5155">JokeViewModel</span>.<b style="color:#a0399c">self</b>) <b style="color:#a0399c">var</b> <span style="color:#2d70a6">viewModel</span></div>
<div class="a" style="left:136.5px;top:380.5px;font-family:'Liberation Mono',monospace;font-size:30.9px;line-height:30.9px;color:#262626">    <span style="color:#687684">// Controls punchline visibility</span></div>
<div class="a" style="left:136.5px;top:420.5px;font-family:'Liberation Mono',monospace;font-size:30.9px;line-height:30.9px;color:#262626">    <span style="color:#4522ac">@State</span> <b style="color:#a0399c">var</b> <span style="color:#2d70a6">punchlineOpacity</span> = <span style="color:#2414d0">0.0</span></div>
<div class="a" style="left:136.5px;top:500.5px;font-family:'Liberation Mono',monospace;font-size:30.9px;line-height:30.9px;color:#262626">    <span style="color:#687684">// Controls button visibility</span></div>
<div class="a" style="left:136.5px;top:540.5px;font-family:'Liberation Mono',monospace;font-size:30.9px;line-height:30.9px;color:#262626">    <span style="color:#4522ac">@State</span> <b style="color:#a0399c">var</b> <span style="color:#2d70a6">buttonOpacity</span> = <span style="color:#2414d0">0.0</span></div>
<div class="a" style="left:136.5px;top:620.5px;font-family:'Liberation Mono',monospace;font-size:30.9px;line-height:30.9px;color:#262626">    <span style="color:#687684">// Controls whether save button is enabled</span></div>
<div class="a" style="left:136.5px;top:660.5px;font-family:'Liberation Mono',monospace;font-size:30.9px;line-height:30.9px;color:#262626">    <span style="color:#4522ac">@State</span> <b style="color:#a0399c">var</b> <span style="color:#2d70a6">jokeHasBeenSaved</span> = <b style="color:#a0399c">false</b></div>
<div class="a" style="left:136.5px;top:740.5px;font-family:'Liberation Mono',monospace;font-size:30.9px;line-height:30.9px;color:#262626">    <span style="color:#687684">// Starts a timer to wait on revealing punchline</span></div>
<div class="a" style="left:136.5px;top:780.5px;font-family:'Liberation Mono',monospace;font-size:30.9px;line-height:30.9px;color:#262626">    <span style="color:#4522ac">@State</span> <b style="color:#a0399c">var</b> <span style="color:#2d70a6">punchlineTimer</span> = <span style="color:#4522ac">Timer</span>.<span style="color:#7444b0">publish</span>(<span style="color:#7444b0">every</span>: <span style="color:#2414d0">3</span>, <span style="color:#7444b0">on</span>: .<span style="color:#7444b0">main</span>, <span style="color:#7444b0">in</span>:</div>
<div class="a" style="left:136.5px;top:820.5px;font-family:'Liberation Mono',monospace;font-size:30.9px;line-height:30.9px;color:#262626">        .<span style="color:#7444b0">common</span>).autoconnect()</div>
<div class="a" style="left:136.5px;top:900.5px;font-family:'Liberation Mono',monospace;font-size:30.9px;line-height:30.9px;color:#262626">    <span style="color:#687684">// Starts a timer to wait on revealing button to get new joke</span></div>
<div class="a" style="left:136.5px;top:940.5px;font-family:'Liberation Mono',monospace;font-size:30.9px;line-height:30.9px;color:#262626">    <span style="color:#4522ac">@State</span> <b style="color:#a0399c">var</b> <span style="color:#2d70a6">buttonTimer</span> = <span style="color:#4522ac">Timer</span>.<span style="color:#7444b0">publish</span>(<span style="color:#7444b0">every</span>: <span style="color:#2414d0">5</span>, <span style="color:#7444b0">on</span>: .<span style="color:#7444b0">main</span>, <span style="color:#7444b0">in</span>:</div>
<div class="a" style="left:136.5px;top:980.5px;font-family:'Liberation Mono',monospace;font-size:30.9px;line-height:30.9px;color:#262626">        .<span style="color:#7444b0">common</span>).autoconnect()</div>
<div class="a" style="left:136.5px;top:1060.5px;font-family:'Liberation Mono',monospace;font-size:30.9px;line-height:30.9px;color:#262626">    <span style="color:#687684">// </span><b style="color:#687684">MARK: Computed properties</b></div>
<div class="a" style="left:136.5px;top:1100.5px;font-family:'Liberation Mono',monospace;font-size:30.9px;line-height:30.9px;color:#262626">    <b style="color:#a0399c">var</b> <span style="color:#2d70a6">body</span>: <b style="color:#a0399c">some</b> <span style="color:#4522ac">View</span> {     }</div>
<div class="a" style="left:136.5px;top:1140.5px;font-family:'Liberation Mono',monospace;font-size:30.9px;line-height:30.9px;color:#262626">}</div>
<div class="a" style="left:136.5px;top:1220.5px;font-family:'Liberation Mono',monospace;font-size:30.9px;line-height:30.9px;color:#262626"><span style="color:#7444b0">#Preview</span> {</div>
<div class="a" style="left:136.5px;top:1260.5px;font-family:'Liberation Mono',monospace;font-size:30.9px;line-height:30.9px;color:#262626">    <span style="color:#2a5155">JokeView</span>()</div>
<div class="a" style="left:136.5px;top:1300.5px;font-family:'Liberation Mono',monospace;font-size:30.9px;line-height:30.9px;color:#262626">        .<span style="color:#7444b0">environment</span>(<span style="color:#2a5155">JokeViewModel</span>())</div>
<div class="a" style="left:136.5px;top:1340.5px;font-family:'Liberation Mono',monospace;font-size:30.9px;line-height:30.9px;color:#262626">}</div>
</div>
<div class="a" style="left:1164px;top:1290px;width:59px;height:27px;border-radius:13.5px;background:#e6e6e6"></div>
<div class="a" style="left:1176.5px;top:1300px;width:7px;height:7px;border-radius:50%;background:#6b6b6b"></div>
<div class="a" style="left:1190.0px;top:1300px;width:7px;height:7px;border-radius:50%;background:#6b6b6b"></div>
<div class="a" style="left:1203.5px;top:1300px;width:7px;height:7px;border-radius:50%;background:#6b6b6b"></div>
<div class="a" style="left:2276px;top:190px;width:30px;height:1642px;background:#fafafa;"></div>
<div class="a" style="left:2276px;top:190px;width:1px;height:1642px;background:#e8e8e8;"></div>
<div class="a" style="left:2305px;top:190px;width:2px;height:1642px;background:#e6e6e6;"></div>
<div class="a" style="left:2284px;top:355px;width:16px;height:1115px;background:#808080;border-radius:8px;"></div>
<div class="a" style="left:2307px;top:190px;width:717px;height:1642px;background:#f1f1f1;"></div>
<div class="a" style="left:2332px;top:214px;width:63px;height:52px;border-radius:11px;background:#fff;box-shadow:0 1px 3px rgba(0,0,0,.18)"></div>
<svg class="a" style="left:2352px;top:224px;" width="22" height="31" viewBox="0 0 22 31"><g fill="none" stroke="#454545" stroke-width="2" stroke-linejoin="round" stroke-linecap="round"><path d="M2.6 1.2 H18.4 L14.4 4 V11.2 Q19.8 13.2 20 17.6 H1.2 Q1.4 13.2 6.6 11.2 V4 Z"/><path d="M10.6 18 V28.8"/></g></svg>
<div class="a" style="left:2415px;top:214px;width:167px;height:52px;border-radius:11px;background:#cfe0fa;box-shadow:0 1px 3px rgba(0,0,0,.12)"></div>
<svg class="a" style="left:2433px;top:226px;" width="23" height="25" viewBox="0 0 23 25"><g fill="none" stroke="#2f74ee" stroke-width="2"><rect x="1" y="8.2" width="21" height="15.8" rx="3"/><path d="M2.8 5 H20.2 M5 1.8 H18"/></g></svg>
<div class="a" style="left:2467.0px;top:228.9px;font-size:22.8px;line-height:22.8px;color:#2f74ee;font-family:'Liberation Sans',sans-serif;">JokeView</div>
<div class="a" style="left:2352px;top:594px;width:10px;height:46px;background:#2e2e2e;border-radius:2px"></div>
<div class="a" style="left:2352px;top:682px;width:10px;height:87px;background:#2e2e2e;border-radius:2px"></div>
<div class="a" style="left:2352px;top:793px;width:10px;height:89px;background:#2e2e2e;border-radius:2px"></div>
<div class="a" style="left:2970px;top:739px;width:9px;height:141px;background:#2e2e2e;border-radius:2px"></div>
<svg class="a" style="left:0px;top:0px;" width="3024" height="1888" viewBox="0 0 3024 1888"><path d="M2533.57 370.20L2798.23 370.20C2848.41 370.20 2873.50 370.20 2896.13 377.67C2930.00 389.57 2953.13 412.70 2965.03 446.57C2972.50 469.20 2972.50 494.29 2972.50 544.47L2972.50 1476.53C2972.50 1526.71 2972.50 1551.80 2965.03 1574.43C2953.13 1608.30 2930.00 1631.43 2896.13 1643.33C2873.50 1650.80 2848.41 1650.80 2798.23 1650.80L2533.57 1650.80C2483.39 1650.80 2458.30 1650.80 2435.67 1643.33C2401.80 1631.43 2378.67 1608.30 2366.77 1574.43C2359.30 1551.80 2359.30 1526.71 2359.30 1476.53L2359.30 544.47C2359.30 494.29 2359.30 469.20 2366.77 446.57C2378.67 412.70 2401.80 389.57 2435.67 377.67C2458.30 370.20 2483.39 370.20 2533.57 370.20Z" fill="#2f2f2f" stroke="#6f6f6f" stroke-width="1.4"/><path d="M2529.04 378.00L2802.46 378.00C2849.12 378.00 2872.45 378.00 2893.49 384.94C2924.98 396.01 2946.49 417.52 2957.56 449.01C2964.50 470.05 2964.50 493.38 2964.50 540.04L2964.50 1480.96C2964.50 1527.62 2964.50 1550.95 2957.56 1571.99C2946.49 1603.48 2924.98 1624.99 2893.49 1636.06C2872.45 1643.00 2849.12 1643.00 2802.46 1643.00L2529.04 1643.00C2482.38 1643.00 2459.05 1643.00 2438.01 1636.06C2406.52 1624.99 2385.01 1603.48 2373.94 1571.99C2367.00 1550.95 2367.00 1527.62 2367.00 1480.96L2367.00 540.04C2367.00 493.38 2367.00 470.05 2373.94 449.01C2385.01 417.52 2406.52 396.01 2438.01 384.94C2459.05 378.00 2482.38 378.00 2529.04 378.00Z" fill="#000"/><path d="M2523.17 390.70L2808.83 390.70C2849.77 390.70 2870.24 390.70 2888.70 396.79C2916.33 406.50 2935.20 425.37 2944.91 453.00C2951.00 471.46 2951.00 491.93 2951.00 532.87L2951.00 1487.63C2951.00 1528.57 2951.00 1549.04 2944.91 1567.50C2935.20 1595.13 2916.33 1614.00 2888.70 1623.71C2870.24 1629.80 2849.77 1629.80 2808.83 1629.80L2523.17 1629.80C2482.23 1629.80 2461.76 1629.80 2443.30 1623.71C2415.67 1614.00 2396.80 1595.13 2387.09 1567.50C2381.00 1549.04 2381.00 1528.57 2381.00 1487.63L2381.00 532.87C2381.00 491.93 2381.00 471.46 2387.09 453.00C2396.80 425.37 2415.67 406.50 2443.30 396.79C2461.76 390.70 2482.23 390.70 2523.17 390.70Z" fill="#fff"/></svg>
<div class="a" style="left:2577px;top:411px;width:178px;height:51px;background:#000;border-radius:26px"></div>
<div class="a" style="left:2403.5px;top:542.9px;font-size:49px;line-height:49px;color:#000;font-family:'Liberation Sans',sans-serif;font-weight:bold;letter-spacing:-1.0px;">New Jokes</div>
<div class="a" style="left:1666.0px;width:2000px;text-align:center;top:870.1px;font-size:37.9px;line-height:37.9px;color:#000;font-family:'Liberation Sans',sans-serif;">What do you call a belt made out</div>
<div class="a" style="left:1666.0px;width:2000px;text-align:center;top:918.3px;font-size:37.9px;line-height:37.9px;color:#000;font-family:'Liberation Sans',sans-serif;">of watches?</div>
<div class="a" style="left:1666.0px;width:2000px;text-align:center;top:1122.2px;font-size:38px;line-height:38px;color:#000;font-family:'Liberation Sans',sans-serif;">A waist of time.</div>
<div class="a" style="left:2578px;top:1189px;width:176px;height:47px;border-radius:12px;background:#67c46a"></div>
<div class="a" style="left:1666.0px;width:2000px;text-align:center;top:1201.8px;font-size:23.8px;line-height:23.8px;color:#fff;font-family:'Liberation Sans',sans-serif;">Save for later</div>
<div class="a" style="left:2596px;top:1276.5px;width:140px;height:48px;border-radius:12px;background:#3478f6"></div>
<div class="a" style="left:1666.0px;width:2000px;text-align:center;top:1289.8px;font-size:23.8px;line-height:23.8px;color:#fff;font-family:'Liberation Sans',sans-serif;">New Joke</div>
<div class="a" style="left:2332px;top:1756px;width:163px;height:52px;border-radius:13px;background:#fff;box-shadow:0 1px 3px rgba(0,0,0,.16)"></div>
<div class="a" style="left:2514.6px;top:1756px;width:63.40000000000009px;height:52px;border-radius:13px;background:#fff;box-shadow:0 1px 3px rgba(0,0,0,.16)"></div>
<div class="a" style="left:2598px;top:1756px;width:54px;height:52px;border-radius:13px;background:#fff;box-shadow:0 1px 3px rgba(0,0,0,.16)"></div>
<div class="a" style="left:2792px;top:1756px;width:208px;height:52px;border-radius:13px;background:#fff;box-shadow:0 1px 3px rgba(0,0,0,.16)"></div>
<div class="a" style="left:2350px;top:1769px;width:26px;height:26px;border-radius:50%;background:#2f74f0"></div>
<svg class="a" style="left:2357px;top:1775px;" width="12" height="14" viewBox="0 0 12 14"><path d="M2 1.5 L11 7 L2 12.5 Z" fill="#fff" stroke="#fff" stroke-width="1.5" stroke-linejoin="round"/></svg>
<svg class="a" style="left:2398px;top:1770px;" width="24" height="25" viewBox="0 0 24 25"><rect x="1" y="1" width="22" height="23" rx="2.5" fill="none" stroke="#555" stroke-width="2"/><path d="M8 6 L16.5 13.5 L12.5 14 L14.5 19 L12.5 19.8 L10.5 15 L8 17.5 Z" fill="#555"/></svg>
<svg class="a" style="left:2451px;top:1772px;" width="25" height="21" viewBox="0 0 25 21"><g fill="none" stroke="#555" stroke-width="1.7"><rect x="1" y="1" width="5" height="7.5" rx="1"/><rect x="10" y="1" width="5" height="7.5" rx="1"/><rect x="19" y="1" width="5" height="7.5" rx="1"/><rect x="1" y="12.5" width="5" height="7.5" rx="1"/><rect x="10" y="12.5" width="5" height="7.5" rx="1"/><rect x="19" y="12.5" width="5" height="7.5" rx="1"/></g></svg>
<svg class="a" style="left:2533px;top:1770px;" width="26" height="25" viewBox="0 0 26 25"><rect x="1" y="1" width="24" height="9.5" rx="4.75" fill="none" stroke="#555" stroke-width="1.8"/><circle cx="6" cy="5.75" r="3" fill="#555"/><rect x="0" y="13.5" width="26" height="11" rx="5.5" fill="#555"/><circle cx="20" cy="19" r="3.3" fill="#fff"/></svg>
<svg class="a" style="left:2617px;top:1771px;" width="16" height="24" viewBox="0 0 16 24"><rect x="1" y="1" width="14" height="22" rx="2.5" fill="#e0e0e0" stroke="#555" stroke-width="1.8"/><path d="M5.5 20 H10.5 M6 3.5 H10" stroke="#555" stroke-width="1.2"/></svg>
<svg class="a" style="left:2810px;top:1769px;" width="26" height="26" viewBox="0 0 26 26"><circle cx="10" cy="10" r="8.5" fill="none" stroke="#555" stroke-width="2.2"/><path d="M16 16 L23 23" stroke="#555" stroke-width="2.8" stroke-linecap="round"/><path d="M6 10 H14" stroke="#555" stroke-width="2.2"/></svg>
<svg class="a" style="left:2858px;top:1769px;" width="26" height="26" viewBox="0 0 26 26"><circle cx="10" cy="10" r="8.5" fill="none" stroke="#555" stroke-width="2.2"/><path d="M16 16 L23 23" stroke="#555" stroke-width="2.8" stroke-linecap="round"/><path d="M8.5 7 L10.8 5.5 V14.5" fill="none" stroke="#555" stroke-width="1.8"/></svg>
<svg class="a" style="left:2906px;top:1769px;" width="26" height="26" viewBox="0 0 26 26"><circle cx="10" cy="10" r="8.5" fill="none" stroke="#555" stroke-width="2.2"/><path d="M16 16 L23 23" stroke="#555" stroke-width="2.8" stroke-linecap="round"/><rect x="6.8" y="6.8" width="6.4" height="6.4" fill="none" stroke="#555" stroke-width="2"/></svg>
<svg class="a" style="left:2954px;top:1769px;" width="26" height="26" viewBox="0 0 26 26"><circle cx="10" cy="10" r="8.5" fill="none" stroke="#555" stroke-width="2.2"/><path d="M16 16 L23 23" stroke="#555" stroke-width="2.8" stroke-linecap="round"/><path d="M6 10 H14 M10 6 V14" stroke="#555" stroke-width="2.2"/></svg>
<div class="a" style="left:546px;top:1832px;width:2478px;height:2px;background:#e6e6e6;"></div>
<div class="a" style="left:546px;top:1834px;width:2478px;height:54px;background:#ffffff;"></div>
<svg class="a" style="left:568px;top:1851px;" width="31" height="20" viewBox="0 0 31 20"><path d="M3 0 H24 Q26 0 27.5 2 L31 10 L27.5 18 Q26 20 24 20 H3 Q0 20 0 17 V3 Q0 0 3 0 Z" fill="#2f74f0"/></svg>
<div class="a" style="left:1935.0px;width:1000px;text-align:right;top:1848.6px;font-size:24px;line-height:24px;color:#7a7a7a;font-family:'Liberation Sans',sans-serif;-webkit-text-stroke:0.6px #7a7a7a;">Line: 130  Col: 37</div>
<div class="a" style="left:2954px;top:1850px;width:2px;height:22px;background:#dedede;"></div>
<svg class="a" style="left:2972px;top:1848px;" width="28" height="27" viewBox="0 0 28 27"><rect x="1" y="1" width="26" height="25" rx="4" fill="none" stroke="#6b6b6b" stroke-width="2"/><rect x="4.5" y="17" width="19" height="5" rx="1" fill="#6b6b6b"/></svg>
<svg class="a" style="left:0px;top:0px;pointer-events:none;" width="3024" height="1888" viewBox="0 0 3024 1888"><rect x="825.5" y="1483.5" width="547" height="39" fill="none" stroke="#e8412c" stroke-width="7"/><path d="M1399 1483 L2296 1148" stroke="#e8412c" stroke-width="11.5" stroke-linecap="butt"/><path d="M2347.5 1131 L2287 1124.6 L2305.9 1175.6 Z" fill="#e8412c"/></svg>
<div class="a" style="left:1873.0px;top:1321.2px;font-size:54px;line-height:54px;color:#e8412c;font-family:'Liberation Sans',sans-serif;letter-spacing:-0.6px;">Single instance</div>
<div class="a" style="left:1873.0px;top:1385.1px;font-size:54px;line-height:54px;color:#e8412c;font-family:'Liberation Sans',sans-serif;letter-spacing:-0.6px;">of view model</div>
<div class="a" style="left:1873.0px;top:1449.0px;font-size:54px;line-height:54px;color:#e8412c;font-family:'Liberation Sans',sans-serif;letter-spacing:-0.6px;">created just</div>
<div class="a" style="left:1873.0px;top:1512.9px;font-size:54px;line-height:54px;color:#e8412c;font-family:'Liberation Sans',sans-serif;letter-spacing:-0.6px;">for showing this</div>
<div class="a" style="left:1873.0px;top:1576.8px;font-size:54px;line-height:54px;color:#e8412c;font-family:'Liberation Sans',sans-serif;letter-spacing:-0.6px;">preview</div>
</div></body></html>
